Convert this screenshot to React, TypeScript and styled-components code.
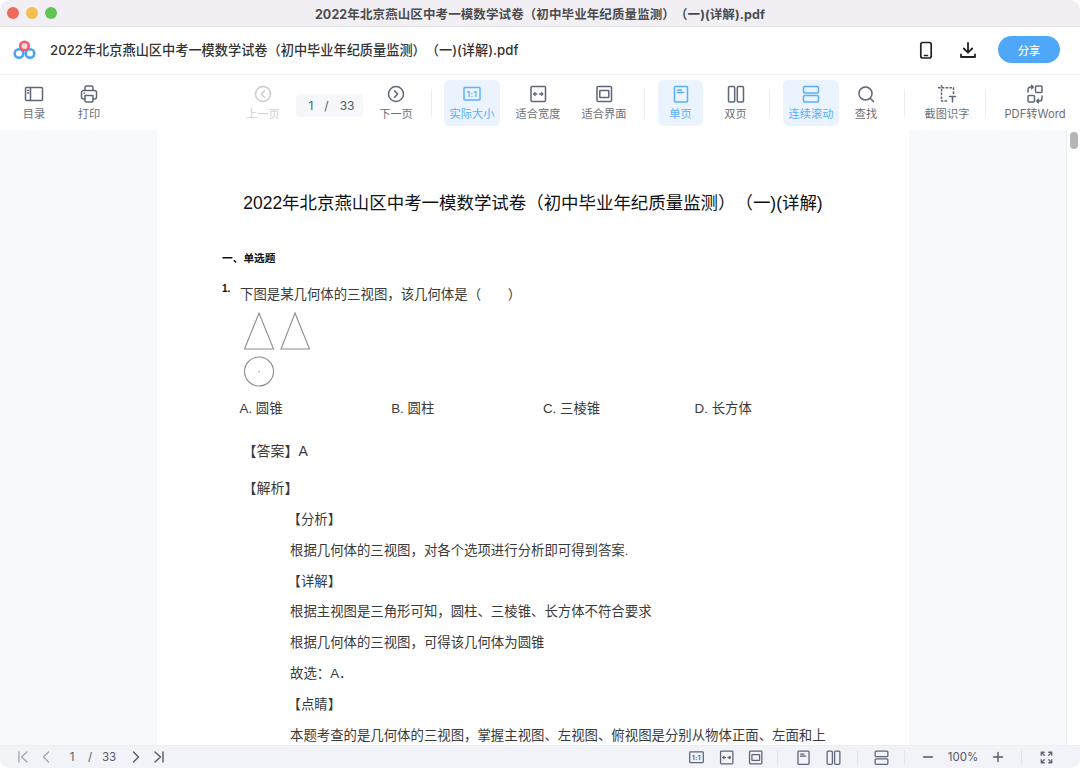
import React, { FC, ReactNode } from "react";
import styled, { createGlobalStyle } from "styled-components";

const UI_FONT = `Inter, "Noto Sans CJK SC", sans-serif`;
const DOC_FONT = `"Liberation Sans", "Noto Sans CJK SC", sans-serif`;
const GRAY = "#5f6677";
const BLUE = "#5aaefb";

const Global = createGlobalStyle`
  html, body { margin: 0; padding: 0; background: #fff; }
  * { box-sizing: border-box; text-spacing-trim: space-all; }
`;

const Window = styled.div`
  width: 1080px;
  height: 768px;
  border-radius: 10px;
  overflow: hidden;
  display: flex;
  flex-direction: column;
  font-family: ${UI_FONT};
`;

const TitleBar = styled.div`
  position: relative;
  height: 27px;
  flex: none;
  display: flex;
  align-items: center;
  justify-content: center;
  background: #f1eff4;
  border-bottom: 1px solid #e2e1e5;
  font-size: 12.5px;
  font-weight: 700;
  letter-spacing: 0.1px;
  color: #4c4c4f;
`;
const Lights = styled.div`
  position: absolute;
  left: 7px;
  top: 7px;
  display: flex;
  gap: 7px;
`;
const Light = styled.span<{ $c: string }>`
  width: 12px;
  height: 12px;
  border-radius: 50%;
  background: ${(p) => p.$c};
`;

const Header = styled.div`
  height: 48px;
  flex: none;
  display: flex;
  align-items: center;
  padding: 0 20px 2px 13px;
  border-bottom: 1px solid #f0f0f2;
  background: #fff;
`;
const DocName = styled.div`
  margin-left: 14px;
  flex: 1;
  font-size: 13.2px;
  font-weight: 500;
  color: #333;
`;
const HeaderIcon = styled.div`
  width: 42px;
  display: flex;
  justify-content: center;
  align-items: center;
`;
const ShareBtn = styled.button`
  margin-left: 9px;
  width: 62px;
  height: 27px;
  border: 0;
  border-radius: 14px;
  background: #4ea7f8;
  color: #fff;
  font: 500 11px ${UI_FONT};
`;

const Toolbar = styled.div`
  height: 55px;
  flex: none;
  display: flex;
  align-items: center;
  padding: 0 10px 0 12px;
  background: #fff;
`;
const Group = styled.div<{ $gap?: number }>`
  display: flex;
  align-items: center;
  gap: ${(p) => p.$gap ?? 10}px;
`;
const Tool = styled.div<{ $w: number; $active?: boolean; $off?: boolean }>`
  width: ${(p) => p.$w}px;
  height: 46px;
  flex: none;
  border-radius: 6px;
  padding-bottom: 1px;
  display: flex;
  flex-direction: column;
  align-items: center;
  justify-content: center;
  gap: 3px;
  white-space: nowrap;
  font-size: 11.2px;
  line-height: 14px;
  background: ${(p) => (p.$active ? "#ebf4fe" : "transparent")};
  color: ${(p) => (p.$active ? BLUE : p.$off ? "#ced0d5" : "#6d7079")};
`;
const PagePill = styled.div`
  width: 67px;
  height: 23px;
  flex: none;
  margin: 6px 11px 0;
  padding-left: 4px;
  background: #f6f7fa;
  border-radius: 4px;
  display: flex;
  align-items: center;
  justify-content: center;
  gap: 11px;
  font-size: 12px;
  color: #555a66;
`;
const ToolSep = styled.div<{ $l: number; $r: number }>`
  width: 1px;
  height: 28px;
  flex: none;
  margin: 0 ${(p) => p.$r}px 0 ${(p) => p.$l}px;
  background: #ecedf0;
`;
const Push = styled.div`
  flex: 1;
`;

const Viewer = styled.div`
  flex: 1;
  min-height: 0;
  display: flex;
  justify-content: space-between;
  background: #f8f9fd;
  overflow: hidden;
`;
const Page = styled.div`
  width: 752px;
  margin-left: 157px;
  height: 100%;
  background: #fff;
  padding: 0 83px;
  font-family: ${DOC_FONT};
  font-size: 13.4px;
  color: #3a3a3a;
  overflow: hidden;
`;
const DocTitle = styled.h1`
  margin: 60px -40px 0;
  text-align: center;
  font-size: 17.45px;
  line-height: 26px;
  font-weight: 400;
  color: #111;
  white-space: nowrap;
`;
const Section = styled.h2`
  margin: 32px 0 0 -18px;
  font-size: 10.7px;
  line-height: 20px;
  font-weight: 700;
  color: #111;
`;
const Question = styled.div`
  position: relative;
  margin-top: 17px;
  line-height: 20px;
`;
const QNum = styled.span`
  position: absolute;
  left: -18px;
  top: -6px;
  font-size: 10px;
  font-weight: 700;
  color: #111;
`;
const Figures = styled.div`
  margin: 6px 0 0 3px;
`;
const Options = styled.div`
  display: grid;
  grid-template-columns: repeat(4, 151.7px);
  margin: 12px 0 0 -0.5px;
  line-height: 20px;
  white-space: nowrap;
`;
const Answer = styled.div<{ $top: number }>`
  margin-top: ${(p) => p.$top}px;
  padding-left: 2.5px;
  font-size: 14px;
  line-height: 20px;
`;
const Detail = styled.div`
  margin: 7px 0 0 50px;
  line-height: 30.8px;
  white-space: nowrap;
`;
const Bracket = styled.div`
  margin-left: -2.5px;
`;

const Scroll = styled.div`
  width: 14px;
  flex: none;
  background: #fff;
  border-left: 1px solid #ececef;
  padding: 2px 2px 0 3px;
`;
const Thumb = styled.div`
  width: 8px;
  height: 17px;
  border-radius: 4px;
  background: #b4b5b7;
`;

const StatusBar = styled.div`
  height: 23px;
  flex: none;
  display: flex;
  align-items: center;
  justify-content: space-between;
  padding: 0 20px 0 13px;
  background: #f1f3f8;
  border-top: 1px solid #eceef3;
  font-size: 11.5px;
  color: #555a66;
`;
const StatusGroup = styled.div`
  display: flex;
  align-items: center;
`;
const Cell = styled.div<{ $w: number }>`
  width: ${(p) => p.$w}px;
  display: flex;
  justify-content: center;
  align-items: center;
  flex: none;
`;
const StatusSep = styled.div`
  width: 1px;
  height: 15px;
  flex: none;
  background: #e2e4ea;
`;

const Ico: FC<{ s?: number; c?: string; w?: number; children: ReactNode }> = ({ s = 20, c = GRAY, w = 1.5, children }) => (
  <svg width={s} height={s} viewBox="0 0 20 20" fill="none" stroke={c} strokeWidth={w} strokeLinecap="round" strokeLinejoin="round">
    {children}
  </svg>
);

type IP = { c?: string; s?: number };

const TocIcon: FC<IP> = (p) => (
  <Ico {...p}>
    <rect x="1.5" y="3.5" width="17" height="13" rx="1" />
    <path d="M6.5 3.5v13M3.6 6.5h1M3.6 9h1" />
  </Ico>
);
const PrintIcon: FC<IP> = (p) => (
  <Ico {...p}>
    <path d="M6 6.5V3.500A1.500 1.500 0 0 1 7.500 2h5A1.500 1.500 0 0 1 14 3.500v3" />
    <path d="M6 15H4.500a2 2 0 0 1-2-2V8.500a2 2 0 0 1 2-2h11a2 2 0 0 1 2 2V13a2 2 0 0 1-2 2H14" />
    <path d="M6 11.500h8V17a1 1 0 0 1-1 1H7a1 1 0 0 1-1-1z" />
    <path d="M5 9.200h.5" />
  </Ico>
);
const CirclePrev: FC<IP> = (p) => (
  <Ico {...p}>
    <circle cx="10" cy="10" r="7.500" />
    <path d="M11.500 6.800 8.300 10l3.200 3.200" />
  </Ico>
);
const CircleNext: FC<IP> = (p) => (
  <Ico {...p}>
    <circle cx="10" cy="10" r="7.500" />
    <path d="M8.500 6.800 11.700 10l-3.200 3.200" />
  </Ico>
);
const ActualIcon: FC<IP> = (p) => (
  <Ico {...p}>
    <rect x="2" y="3.500" width="16" height="12.500" rx="1" />
    <text x="10" y="12.500" fontSize="7.500" fontWeight="700" letterSpacing=".5" fill={p.c ?? GRAY} stroke="none" textAnchor="middle" fontFamily="Inter, sans-serif">
      1:1
    </text>
  </Ico>
);
const WidthIcon: FC<IP> = (p) => (
  <Ico {...p}>
    <rect x="3" y="2.500" width="14.500" height="15" rx="1" />
    <path d="M6 10h2.800M11.700 10h2.800" />
    <path d="M7 8.800 5.800 10 7 11.200M13.500 8.800l1.200 1.200-1.200 1.200" />
  </Ico>
);
const FitIcon: FC<IP> = (p) => (
  <Ico {...p}>
    <rect x="3" y="2.500" width="14.500" height="15" rx="1" />
    <rect x="5.800" y="6.500" width="9" height="7" rx=".5" />
  </Ico>
);
const SingleIcon: FC<IP> = (p) => (
  <Ico {...p}>
    <rect x="3.500" y="2.500" width="13" height="15.500" rx="1" />
    <path d="M6.500 6h4M6.500 8.500h6" />
  </Ico>
);
const DoubleIcon: FC<IP> = (p) => (
  <Ico {...p}>
    <rect x="2.500" y="2.500" width="6.200" height="15.500" rx="1.200" />
    <rect x="11.300" y="2.500" width="6.200" height="15.500" rx="1.200" />
  </Ico>
);
const ContinuousIcon: FC<IP> = (p) => (
  <Ico {...p}>
    <rect x="2.500" y="2.500" width="15" height="6.500" rx="1.200" />
    <rect x="2.500" y="11.500" width="15" height="6.500" rx="1.200" />
  </Ico>
);
const SearchIcon: FC<IP> = (p) => (
  <Ico {...p}>
    <circle cx="9.500" cy="9.500" r="6.500" />
    <path d="m14.500 14.500 3 3" />
  </Ico>
);
const CropIcon: FC<IP> = (p) => (
  <Ico {...p}>
    <path d="M4.500 1v16h6" strokeDasharray="2.600 1.200" strokeLinecap="butt" />
    <path d="M1 3.800h15.500v6.500" strokeDasharray="2.600 1.200" strokeLinecap="butt" />
    <path d="M12.500 12.500h6M15.500 12.500v5.500" />
  </Ico>
);
const ConvertIcon: FC<IP> = (p) => (
  <Ico {...p}>
    <rect x="10.500" y="2" width="6.500" height="6.500" rx="1" />
    <rect x="3" y="11.500" width="6.500" height="6.500" rx="1" />
    <path d="M3 8V5.500A2.500 2.500 0 0 1 5.500 3H8M6.500 1.200 8.300 3 6.500 4.800" />
    <path d="M17 12v2.500a2.500 2.500 0 0 1-2.500 2.500H12M13.500 15.200 11.700 17l1.800 1.800" />
  </Ico>
);
const PhoneIcon: FC = () => (
  <Ico s={20} c="#222" w={1.7}>
    <rect x="4.800" y="2.500" width="10.400" height="15.500" rx="2" />
    <path d="M8.500 15.500h3" />
  </Ico>
);
const DownloadIcon: FC = () => (
  <Ico s={20} c="#222" w={1.8}>
    <path d="M10 2.800v9.500M5.800 8.500l4.200 4.200 4.200-4.200M3 14.500v2.500h14v-2.500" />
  </Ico>
);
const Logo: FC = () => (
  <svg width="23" height="20" viewBox="0 0 23 20" fill="none" strokeWidth="2.600">
    <circle cx="6" cy="13.500" r="4.300" stroke="#4aa5f2" />
    <circle cx="17" cy="13.500" r="4.300" stroke="#4aa5f2" />
    <circle cx="11.500" cy="6" r="4.300" stroke="#e8616c" fill="#f7d5dc" />
  </svg>
);
const Chevron: FC<{ d: string; c: string }> = ({ d, c }) => (
  <svg width="14" height="14" viewBox="0 0 14 14" fill="none" stroke={c} strokeWidth="1.400" strokeLinecap="round" strokeLinejoin="round">
    <path d={d} />
  </svg>
);
const Expand: FC = () => (
  <Ico s={15} w={1.700}>
    <path d="M3 7V3h4M17 7V3h-4M3 13v4h4M17 13v4h-4M3 3l4 4M17 3l-4 4M3 17l4-4M17 17l-4-4" />
  </Ico>
);

const Shapes: FC = () => (
  <svg width="68" height="76" viewBox="0 0 68 76" fill="none" stroke="#8d8d8d" strokeWidth="1.100" style={{ display: "block" }}>
    <path d="M16 2 30.500 38H1.500z" />
    <path d="M52 2 66.500 38H38z" />
    <circle cx="16" cy="60.500" r="14.500" />
    <circle cx="16" cy="60.500" r=".5" strokeOpacity=".5" />
  </svg>
);

export default function App() {
  return (
    <Window>
      <Global />
      <TitleBar>
        <Lights>
          <Light $c="#ee6a5f" />
          <Light $c="#f5bd4f" />
          <Light $c="#61c454" />
        </Lights>
        2022年北京燕山区中考一模数学试卷（初中毕业年纪质量监测）（一)(详解).pdf
      </TitleBar>
      <Header>
        <Logo />
        <DocName>2022年北京燕山区中考一模数学试卷（初中毕业年纪质量监测）（一)(详解).pdf</DocName>
        <HeaderIcon>
          <PhoneIcon />
        </HeaderIcon>
        <HeaderIcon>
          <DownloadIcon />
        </HeaderIcon>
        <ShareBtn>分享</ShareBtn>
      </Header>
      <Toolbar>
        <Group $gap={11}>
          <Tool $w={44}><TocIcon />目录</Tool>
          <Tool $w={44}><PrintIcon />打印</Tool>
        </Group>
        <Push />
        <Group $gap={0}>
          <Tool $w={44} $off><CirclePrev c="#c9ccd3" />上一页</Tool>
          <PagePill><span>1</span><span>/</span><span>33</span></PagePill>
          <Tool $w={44}><CircleNext />下一页</Tool>
        </Group>
        <ToolSep $l={13} $r={12} />
        <Group>
          <Tool $w={56} $active><ActualIcon c={BLUE} />实际大小</Tool>
          <Tool $w={56}><WidthIcon />适合宽度</Tool>
          <Tool $w={56}><FitIcon />适合界面</Tool>
        </Group>
        <ToolSep $l={12} $r={13} />
        <Group>
          <Tool $w={45} $active><SingleIcon c={BLUE} />单页</Tool>
          <Tool $w={45}><DoubleIcon />双页</Tool>
        </Group>
        <ToolSep $l={11} $r={13} />
        <Group $gap={5}>
          <Tool $w={56} $active><ContinuousIcon c={BLUE} />连续滚动</Tool>
          <Tool $w={44}><SearchIcon />查找</Tool>
        </Group>
        <ToolSep $l={16} $r={14} />
        <Tool $w={56}><CropIcon />截图识字</Tool>
        <ToolSep $l={10} $r={14} />
        <Tool $w={70}><ConvertIcon />PDF转Word</Tool>
      </Toolbar>
      <Viewer>
        <Page>
          <DocTitle>2022年北京燕山区中考一模数学试卷（初中毕业年纪质量监测）（一)(详解)</DocTitle>
          <Section>一、单选题</Section>
          <Question>
            <QNum>1.</QNum>
            下图是某几何体的三视图，该几何体是（&emsp;&emsp;）
          </Question>
          <Figures>
            <Shapes />
          </Figures>
          <Options>
            <span>A. 圆锥</span>
            <span>B. 圆柱</span>
            <span>C. 三棱锥</span>
            <span>D. 长方体</span>
          </Options>
          <Answer $top={22}>【答案】A</Answer>
          <Answer $top={17}>【解析】</Answer>
          <Detail>
            <Bracket>【分析】</Bracket>
            <div>根据几何体的三视图，对各个选项进行分析即可得到答案.</div>
            <Bracket>【详解】</Bracket>
            <div>根据主视图是三角形可知，圆柱、三棱锥、长方体不符合要求</div>
            <div>根据几何体的三视图，可得该几何体为圆锥</div>
            <div>故选：A．</div>
            <Bracket>【点睛】</Bracket>
            <div>本题考查的是几何体的三视图，掌握主视图、左视图、俯视图是分别从物体正面、左面和上</div>
          </Detail>
        </Page>
        <Scroll>
          <Thumb />
        </Scroll>
      </Viewer>
      <StatusBar>
        <StatusGroup>
          <Cell $w={20}><Chevron c="#a4a8b2" d="M3 2v10M11 2 5.500 7l5.500 5" /></Cell>
          <Cell $w={26}><Chevron c="#a4a8b2" d="M9.500 2 4.500 7l5 5" /></Cell>
          <Cell $w={26}>1</Cell>
          <Cell $w={10}>/</Cell>
          <Cell $w={28}>33</Cell>
          <Cell $w={26}><Chevron c="#555a66" d="M4.500 2l5 5-5 5" /></Cell>
          <Cell $w={20}><Chevron c="#555a66" d="M3 2l5.500 5L3 12M11 2v10" /></Cell>
        </StatusGroup>
        <StatusGroup>
          <Cell $w={29}><ActualIcon s={17} /></Cell>
          <Cell $w={30}><WidthIcon s={17} /></Cell>
          <Cell $w={29}><FitIcon s={17} /></Cell>
          <Cell $w={14}><StatusSep /></Cell>
          <Cell $w={38}><SingleIcon s={17} /></Cell>
          <Cell $w={22}><DoubleIcon s={17} /></Cell>
          <Cell $w={26}><StatusSep /></Cell>
          <Cell $w={22}><ContinuousIcon s={17} /></Cell>
          <Cell $w={24}><StatusSep /></Cell>
          <Cell $w={24}><Chevron c="#555a66" d="M2.500 7h9" /></Cell>
          <Cell $w={46}>100%</Cell>
          <Cell $w={24}><Chevron c="#555a66" d="M2.500 7h9M7 2.500v9" /></Cell>
          <Cell $w={22}><StatusSep /></Cell>
          <Cell $w={28}><Expand /></Cell>
        </StatusGroup>
      </StatusBar>
    </Window>
  );
}
